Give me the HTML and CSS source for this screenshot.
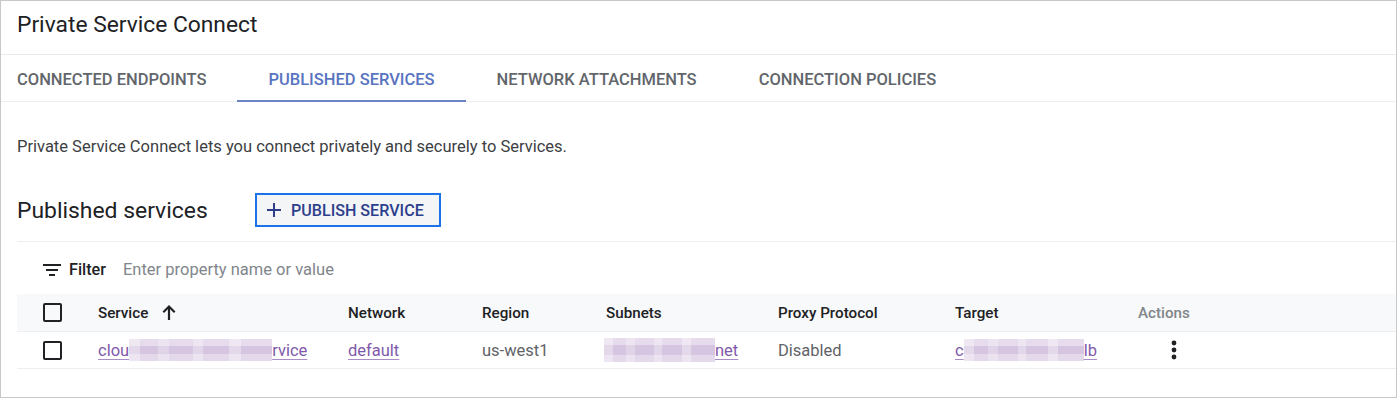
FILE: index.html
```html
<!DOCTYPE html>
<html lang="en">
<head>
    <meta charset="UTF-8">
    <title>Private Service Connect</title>
    <link rel="stylesheet" href="styles.css">
</head>
<body>
    <div class="frame">
        <div class="title-bar">
            <h1>Private Service Connect</h1>
        </div>

        <div class="tabs">
            <div class="tab first">CONNECTED ENDPOINTS</div>
            <div class="tab active">PUBLISHED SERVICES</div>
            <div class="tab">NETWORK ATTACHMENTS</div>
            <div class="tab">CONNECTION POLICIES</div>
        </div>

        <p class="intro">Private Service Connect lets you connect privately and securely to Services.</p>

        <div class="section-head">
            <h2>Published services</h2>
            <button class="publish-btn">
                <svg width="16" height="16" viewBox="0 0 16 16"><path d="M8 1v14M1 8h14" stroke="currentColor" stroke-width="2"/></svg>
                PUBLISH SERVICE
            </button>
        </div>

        <div class="table-wrap">
            <div class="filter">
                <svg width="18" height="12" viewBox="0 0 18 12"><path d="M0 1h18M3 6h12M6 11h6" stroke="#202124" stroke-width="2"/></svg>
                <span class="filter-label">Filter</span>
                <span class="filter-hint">Enter property name or value</span>
            </div>

            <div class="row head">
                <div class="cell check"><span class="box"></span></div>
                <div class="cell">Service
                    <svg class="sort" width="14" height="17" viewBox="0 0 14 17"><path d="M7 16V2.5M1.3 8.2L7 2.5l5.7 5.7" stroke="#202124" stroke-width="2.2" fill="none"/></svg>
                </div>
                <div class="cell">Network</div>
                <div class="cell">Region</div>
                <div class="cell">Subnets</div>
                <div class="cell">Proxy Protocol</div>
                <div class="cell">Target</div>
                <div class="cell muted">Actions</div>
            </div>

            <div class="row body">
                <div class="cell check"><span class="box"></span></div>
                <div class="cell"><a class="link">clou<span class="blur blur-a"></span>rvice</a></div>
                <div class="cell"><a class="link">default</a></div>
                <div class="cell grey">us-west1</div>
                <div class="cell"><span class="blur blur-b"></span><a class="link">net</a></div>
                <div class="cell grey">Disabled</div>
                <div class="cell"><a class="link">c<span class="blur blur-c"></span>lb</a></div>
                <div class="cell">
                    <svg class="kebab" width="6" height="20" viewBox="0 0 6 20"><circle cx="3" cy="3" r="2.4"/><circle cx="3" cy="10" r="2.4"/><circle cx="3" cy="17" r="2.4"/></svg>
                </div>
            </div>
        </div>
    </div>
</body>
</html>
```

FILE: styles.css
```css
/* page frame */
body {
    margin: 0;
    font-family: Roboto, "Noto Sans", Arial, sans-serif;
    font-size: 16.5px;
    color: #202124;
    background: #fff;
}
.frame {
    width: 1395px;
    height: 396px;
    border: 1px solid #c8c8c8;
    overflow: hidden;
}

/* title */
.title-bar {
    height: 53px;
    border-bottom: 1px solid #e8eaed;
    padding-left: 16px;
    display: flex;
    align-items: center;
}
h1 {
    margin: 0;
    margin-top: -7px;
    font-size: 22.8px;
    font-weight: 400;
    color: #202124;
}

/* tabs */
.tabs {
    display: flex;
    height: 46px;
    border-bottom: 1px solid #eceef1;
}
.tab {
    padding: 4px 31px 0;
    display: flex;
    align-items: center;
    font-size: 16.5px;
    font-weight: 500;
    color: #62666b;
    border-bottom: 2px solid transparent;
    margin-bottom: -1px;
}
.tab.first {
    padding-left: 16px;
}
.tab.active {
    color: #5874c0;
    border-bottom-color: #6d82c4;
}

.intro {
    margin: 35px 0 0 16px;
    line-height: 20px;
    color: #3c4043;
}

/* section heading + button */
.section-head {
    display: flex;
    align-items: center;
    height: 34px;
    margin-top: 36px;
    padding-left: 16px;
}
h2 {
    margin: 0;
    font-size: 22.9px;
    font-weight: 400;
    width: 238px;
}
.publish-btn {
    height: 34px;
    width: 186px;
    border: 2px solid #1a73e8;
    background: #f4f5f7;
    color: #2d3f8c;
    font-family: inherit;
    font-size: 16.1px;
    font-weight: 500;
    display: flex;
    align-items: center;
    gap: 9px;
    padding: 0 0 0 9px;
}

/* table */
.table-wrap {
    margin: 14px 0 0 16px;
    border-top: 1px solid #eceef1;
}
.filter {
    height: 52px;
    box-sizing: border-box;
    padding: 3px 0 0 26px;
    display: flex;
    align-items: center;
}
.filter-label {
    font-weight: 500;
    font-size: 16.2px;
    margin-left: 8px;
    color: #202124;
}
.filter-hint {
    margin-left: 17px;
    color: #80868b;
}
.row {
    display: grid;
    grid-template-columns: 81px 250px 134px 124px 172px 177px 183px 1fr;
    align-items: center;
    border-bottom: 1px solid #eceef1;
}
.row.head {
    height: 37px;
    background: #f8f9fa;
    font-size: 15.2px;
    font-weight: 500;
}
.row.body {
    height: 36px;
}
.cell {
    display: flex;
    align-items: center;
}
.cell.check {
    padding-left: 26px;
}
.box {
    width: 15px;
    height: 15px;
    border: 2px solid #202124;
    border-radius: 2px;
}
.sort {
    margin-left: 14px;
}
.muted {
    color: #80868b;
}
.grey {
    color: #5f6368;
}
.link {
    color: #8059aa;
    text-decoration: underline;
    text-decoration-color: #a88cc6;
    text-underline-offset: 3px;
    display: inline-flex;
    align-items: center;
}

/* pixelated placeholders over hidden names */
.blur {
    display: inline-block;
    height: 22px;
    background:
        linear-gradient(90deg, rgba(255,255,255,0.35) 0 8%, transparent 8% 20%, rgba(255,255,255,0.25) 20% 28%, transparent 28% 45%, rgba(255,255,255,0.3) 45% 52%, transparent 52% 70%, rgba(255,255,255,0.35) 70% 78%, transparent 78%),
        linear-gradient(180deg, #e6dced 0 30%, #d6c5e1 30% 70%, #e4d9eb 70%);
}
.blur-a {
    width: 143px;
}
.blur-b {
    width: 111px;
    height: 24px;
    margin-left: -2px;
}
.blur-c {
    width: 120px;
}
.kebab {
    margin-left: 33px;
    fill: #202124;
}
```
